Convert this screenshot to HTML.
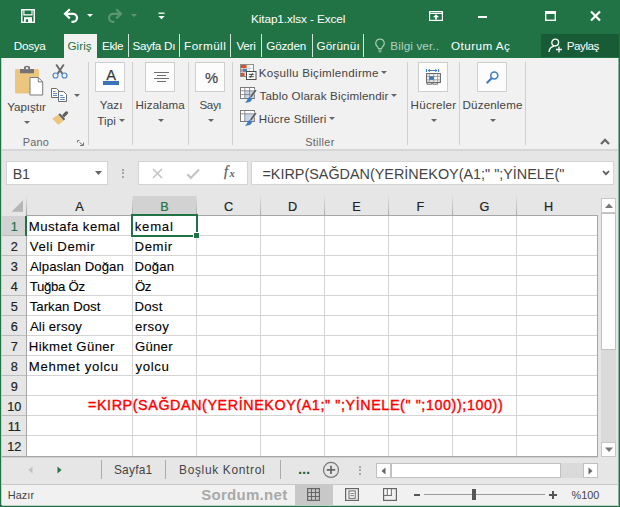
<!DOCTYPE html>
<html lang="tr"><head><meta charset="utf-8"><title>Kitap1.xlsx - Excel</title>
<style>
html,body{margin:0;padding:0;}
body{width:620px;height:507px;overflow:hidden;position:relative;background:#217346;font-family:"Liberation Sans", sans-serif;}
#w{position:absolute;left:0;top:0;width:620px;height:507px;overflow:hidden;}
#w div,#w svg,#w span{position:absolute;}
.t{white-space:pre;font-family:"Liberation Sans", sans-serif;}
svg{overflow:visible;}
</style></head><body><div id="w">
<div style="left:0px;top:0px;width:620px;height:507px;background:#217346;"></div>
<div style="left:2px;top:58px;width:617px;height:92px;background:#f1f1f1;"></div>
<div style="left:2px;top:149px;width:617px;height:2px;background:#d6d6d6;"></div>
<div style="left:2px;top:151px;width:617px;height:334px;background:#e6e6e6;"></div>
<div style="left:2px;top:484px;width:617px;height:1px;background:#c8c8c8;"></div>
<div style="left:2px;top:485px;width:617px;height:21px;background:#f1f1f1;"></div>
<div style="left:2px;top:505px;width:617px;height:1px;background:#bcd2c5;"></div>
<div style="left:1px;top:58px;width:1px;height:447px;background:#c3d3ca;"></div>
<div style="left:618px;top:58px;width:1px;height:447px;background:#89b29b;"></div>
<svg style="left:21px;top:9px" width="14" height="14" viewBox="0 0 14 14"><rect x="0.750" y="0.750" width="12.500" height="12.500" fill="none" stroke="#fff" stroke-width="1.500"/><path d="M2.900 0.750V5.900H11V0.750" fill="none" stroke="#fff" stroke-width="1.100"/><rect x="3" y="8.200" width="8" height="5" fill="#fff"/><rect x="4.800" y="10.300" width="2.300" height="2.700" fill="#217346"/></svg>
<svg style="left:63px;top:8px" width="17" height="16" viewBox="0 0 17 16"><path d="M6.800 1.200L2 5.800l4.800 4.600M2.500 5.800H10a4 4 0 0 1 0 8H8.500" fill="none" stroke="#fff" stroke-width="2.200"/></svg>
<svg style="left:87px;top:14px" width="6" height="3" viewBox="0 0 6 3"><path d="M0 0h6L3 3z" fill="#fff"/></svg>
<svg style="left:106px;top:8px" width="17" height="16" viewBox="0 0 17 16"><path d="M10.200 1.200L15 5.800l-4.800 4.600M14.500 5.800H7a4 4 0 0 0 0 8H8.500" fill="none" stroke="#5a9674" stroke-width="2.200"/></svg>
<svg style="left:131px;top:14px" width="6" height="3" viewBox="0 0 6 3"><path d="M0 0h6L3 3z" fill="#5f9a78"/></svg>
<svg style="left:158px;top:12px" width="7" height="8" viewBox="0 0 7 8"><path d="M0.5 1.2h6" stroke="#fff" stroke-width="1.3"/><path d="M0.3 4h6.4L3.5 7.2z" fill="#fff"/></svg>
<span class="t " style="left:251.06px;top:14px;font-size:11.8px;line-height:11.8px;color:#fff;letter-spacing:-0.119px;">Kitap1.xlsx - Excel</span>
<svg style="left:429px;top:11px" width="14" height="10" viewBox="0 0 14 10"><rect x="0.6" y="0.6" width="12.8" height="8.8" fill="none" stroke="#fff" stroke-width="1.2"/><path d="M0.6 2.4h12.8" stroke="#fff" stroke-width="1.2"/><path d="M7 3.200L3.800 6.300h2.300v2.300h1.800V6.300h2.300z" fill="#fff"/></svg>
<div style="left:478px;top:16px;width:9px;height:2px;background:#fff;"></div>
<svg style="left:545px;top:11px" width="11" height="10" viewBox="0 0 11 10"><rect x="0.7" y="0.7" width="9.6" height="8.6" fill="none" stroke="#fff" stroke-width="1.4"/><rect x="0" y="0" width="11" height="3" fill="#fff"/></svg>
<svg style="left:590px;top:11px" width="11" height="10" viewBox="0 0 11 10"><path d="M1 0.5l9 9M10 0.5l-9 9" stroke="#fff" stroke-width="2.2"/></svg>
<span class="t " style="left:13.86px;top:40px;font-size:11.7px;line-height:11.7px;color:#fff;letter-spacing:-0.308px;">Dosya</span>
<div style="left:64px;top:34px;width:33px;height:25px;background:#f1f1f1;"></div>
<span class="t " style="left:67.42px;top:40px;font-size:11.7px;line-height:11.7px;color:#217346;letter-spacing:0.063px;">Giriş</span>
<span class="t " style="left:102.06px;top:40px;font-size:11.7px;line-height:11.7px;color:#fff;letter-spacing:-0.451px;">Ekle</span>
<span class="t " style="left:132.47px;top:40px;font-size:11.7px;line-height:11.7px;color:#fff;letter-spacing:-0.247px;">Sayfa Dı</span>
<span class="t " style="left:184.06px;top:40px;font-size:11.7px;line-height:11.7px;color:#fff;letter-spacing:0.456px;">Formüll</span>
<span class="t " style="left:236.44px;top:40px;font-size:11.7px;line-height:11.7px;color:#fff;letter-spacing:-0.268px;">Veri</span>
<span class="t " style="left:266.22px;top:40px;font-size:11.7px;line-height:11.7px;color:#fff;letter-spacing:-0.181px;">Gözden</span>
<span class="t " style="left:316.42px;top:40px;font-size:11.7px;line-height:11.7px;color:#fff;letter-spacing:0.183px;">Görünüı</span>
<div style="left:128px;top:34px;width:1px;height:23px;background:#d6e5dc;"></div>
<div style="left:179px;top:34px;width:1px;height:23px;background:#d6e5dc;"></div>
<div style="left:230px;top:34px;width:1px;height:23px;background:#d6e5dc;"></div>
<div style="left:261px;top:34px;width:1px;height:23px;background:#d6e5dc;"></div>
<div style="left:312px;top:34px;width:1px;height:23px;background:#d6e5dc;"></div>
<div style="left:363px;top:34px;width:1px;height:23px;background:#d6e5dc;"></div>
<svg style="left:374px;top:38px" width="12" height="15" viewBox="0 0 12 15"><path d="M6 1a4.3 4.3 0 0 0-2.6 7.7c.6.5.9 1 .9 1.8h3.4c0-.8.3-1.3.9-1.8A4.3 4.3 0 0 0 6 1z" fill="none" stroke="#a8cbb6" stroke-width="1.1"/><path d="M4.3 12h3.4M4.6 13.8h2.8" stroke="#a8cbb6" stroke-width="1.1"/></svg>
<span class="t " style="left:390.36px;top:40px;font-size:11.7px;line-height:11.7px;color:#b3d1c0;letter-spacing:0.119px;">Bilgi ver..</span>
<span class="t " style="left:451.07px;top:40px;font-size:11.7px;line-height:11.7px;color:#fff;letter-spacing:0.455px;">Oturum Aç</span>
<div style="left:541px;top:34px;width:78px;height:23px;background:#185c37;"></div>
<svg style="left:548px;top:38px" width="15" height="15" viewBox="0 0 15 15"><circle cx="7.2" cy="4.6" r="3.4" fill="none" stroke="#fff" stroke-width="1.3"/><path d="M1 14c.3-3.6 2.4-5.4 5-5.6" fill="none" stroke="#fff" stroke-width="1.3"/><path d="M11 8.5v6M8 11.5h6" stroke="#fff" stroke-width="1.3"/></svg>
<span class="t " style="left:566.76px;top:40px;font-size:11.7px;line-height:11.7px;color:#fff;letter-spacing:-0.491px;">Paylaş</span>
<div style="left:88px;top:62px;width:1px;height:83px;background:#d0d0d0;"></div>
<div style="left:132px;top:62px;width:1px;height:83px;background:#d0d0d0;"></div>
<div style="left:188px;top:62px;width:1px;height:83px;background:#d0d0d0;"></div>
<div style="left:232px;top:62px;width:1px;height:83px;background:#d0d0d0;"></div>
<div style="left:407px;top:62px;width:1px;height:83px;background:#d0d0d0;"></div>
<div style="left:459px;top:62px;width:1px;height:83px;background:#d0d0d0;"></div>
<div style="left:525px;top:62px;width:1px;height:83px;background:#d0d0d0;"></div>
<svg style="left:14px;top:65px" width="30" height="31" viewBox="0 0 30 31"><rect x="1" y="4" width="24" height="24.5" rx="1.5" fill="#ecc57f"/><path d="M6 8.300V4h4V2.600Q10 0.800 13 0.800t3 1.800V4H20V8.300z" fill="#737373"/><rect x="11.800" y="2.300" width="2.400" height="1.900" fill="#f1f1f1"/><path d="M16 12.500h8.300l4.400 4.400V30H16z" fill="#fff" stroke="#7a7a7a" stroke-width="1"/><path d="M24.300 12.500v4.400h4.400" fill="none" stroke="#7a7a7a" stroke-width="1"/></svg>
<span class="t " style="left:7.27px;top:101px;font-size:11.6px;line-height:11.6px;color:#444;letter-spacing:-0.063px;">Yapıştır</span>
<svg style="left:24px;top:121px" width="6" height="3" viewBox="0 0 6 3"><path d="M0 0h6L3 3z" fill="#666"/></svg>
<svg style="left:52px;top:64px" width="16" height="15" viewBox="0 0 16 15"><path d="M4.200 0.500L10.300 9.600M11.800 0.500L5.700 9.600" stroke="#6a6a6a" stroke-width="1.900" fill="none"/><circle cx="3.500" cy="11.500" r="2.500" fill="none" stroke="#4a86c5" stroke-width="1.150"/><circle cx="12.500" cy="11.500" r="2.500" fill="none" stroke="#4a86c5" stroke-width="1.150"/></svg>
<svg style="left:51px;top:88px" width="17" height="14" viewBox="0 0 17 14"><path d="M0.500 0.500h5l2.500 2.500V9.500H0.500z" fill="#fff" stroke="#6a6a6a" stroke-width="1"/><path d="M2 3.500h2.500M2 5.500h4M2 7.500h4" stroke="#3f7dc1" stroke-width="0.900"/><path d="M7.500 3.500h5l3 3v7H7.500z" fill="#fff" stroke="#6a6a6a" stroke-width="1"/><path d="M9.200 7.500h3M9.200 9.500h4.600M9.200 11.500h4.600" stroke="#3f7dc1" stroke-width="0.900"/></svg>
<svg style="left:74px;top:94px" width="6" height="3" viewBox="0 0 6 3"><path d="M0 0h6L3 3z" fill="#666"/></svg>
<svg style="left:52px;top:110.5px" width="17" height="15" viewBox="0 0 17 15"><path d="M0.200 7.400L6.400 3.600l5.400 5.800-5.500 4.500z" fill="#ecc57f"/><path d="M6.400 3.600l1.500-1.400 5.300 5.800-1.400 1.400z" fill="#5f5f5f"/><path d="M10 4.300l3.600-3.700q1.200-.8 2.200.2.800 1 0 2l-3.700 3.700z" fill="#5f5f5f"/></svg>
<span class="t " style="left:22.83px;top:137px;font-size:10.9px;line-height:10.9px;color:#666;letter-spacing:0.152px;">Pano</span>
<svg style="left:77px;top:140px" width="7" height="6" viewBox="0 0 7 6"><path d="M0.500 2.500V0.500H2.500M2.500 2.500l4 3M6.500 2.500v3h-3.500" fill="none" stroke="#777" stroke-width="1"/></svg>
<div style="left:95px;top:62px;width:30px;height:30px;background:#fcfcfc;border:1px solid #cfcfcf;box-sizing:border-box;"></div>
<div style="left:145px;top:62px;width:30px;height:30px;background:#fcfcfc;border:1px solid #cfcfcf;box-sizing:border-box;"></div>
<div style="left:195px;top:62px;width:30px;height:30px;background:#fcfcfc;border:1px solid #cfcfcf;box-sizing:border-box;"></div>
<div style="left:418px;top:62px;width:30px;height:30px;background:#fcfcfc;border:1px solid #cfcfcf;box-sizing:border-box;"></div>
<div style="left:477px;top:62px;width:30px;height:30px;background:#fcfcfc;border:1px solid #cfcfcf;box-sizing:border-box;"></div>
<span class="t " style="left:106.2px;top:68px;font-size:14.6px;line-height:14.6px;color:#3a3a3a;letter-spacing:0.191px;-webkit-text-stroke:0.25px #3a3a3a;">A</span>
<div style="left:103px;top:81px;width:16px;height:3.5px;background:#3b74b9;"></div>
<span class="t " style="left:99.77px;top:99px;font-size:11.6px;line-height:11.6px;color:#444;letter-spacing:0.082px;">Yazı</span>
<span class="t " style="left:97.37px;top:115px;font-size:11.6px;line-height:11.6px;color:#444;letter-spacing:0.058px;">Tipi</span>
<svg style="left:119px;top:119px" width="6" height="3" viewBox="0 0 6 3"><path d="M0 0h6L3 3z" fill="#666"/></svg>
<div style="left:154px;top:72px;width:14.5px;height:1px;background:#707070;"></div>
<div style="left:156.5px;top:75px;width:9.5px;height:1px;background:#707070;"></div>
<div style="left:154px;top:78px;width:14.5px;height:1px;background:#707070;"></div>
<div style="left:156.5px;top:81px;width:9.5px;height:1px;background:#707070;"></div>
<span class="t " style="left:135.57px;top:99px;font-size:11.6px;line-height:11.6px;color:#444;letter-spacing:0.116px;">Hizalama</span>
<svg style="left:157.5px;top:119px" width="6" height="3" viewBox="0 0 6 3"><path d="M0 0h6L3 3z" fill="#666"/></svg>
<span class="t " style="left:205.08px;top:71px;font-size:14.8px;line-height:14.8px;color:#444;letter-spacing:0.264px;-webkit-text-stroke:0.2px #444;">%</span>
<span class="t " style="left:199.48px;top:99px;font-size:11.6px;line-height:11.6px;color:#444;letter-spacing:-0.378px;">Sayı</span>
<svg style="left:207.5px;top:119px" width="6" height="3" viewBox="0 0 6 3"><path d="M0 0h6L3 3z" fill="#666"/></svg>
<svg style="left:240px;top:64px" width="17" height="16" viewBox="0 0 17 16"><rect x="0.500" y="0.500" width="13" height="12" fill="#fff" stroke="#8e8e8e" stroke-width="1"/><path d="M0.500 4.400h13M0.500 8.400h13M9.200 0.500v12" stroke="#c9c9c9" stroke-width="0.800"/><rect x="1" y="1" width="5.600" height="3" fill="#d8502c"/><rect x="1" y="4.900" width="1.800" height="3" fill="#e58a70"/><rect x="2.800" y="4.900" width="4.200" height="3" fill="#4a7fc4"/><rect x="1" y="8.900" width="3.600" height="3.100" fill="#d8502c"/><rect x="6.500" y="7.500" width="9.500" height="8" fill="#fff" stroke="#4d4d4d" stroke-width="1"/><path d="M8.800 10.400h5M8.800 12.700h5M12.600 9.200l-2.600 4.700" stroke="#333" stroke-width="0.900"/></svg>
<span class="t " style="left:258.77px;top:67px;font-size:11.6px;line-height:11.6px;color:#444;letter-spacing:0.28px;">Koşullu Biçimlendirme</span>
<svg style="left:381px;top:71px" width="6" height="3" viewBox="0 0 6 3"><path d="M0 0h6L3 3z" fill="#666"/></svg>
<svg style="left:240px;top:87px" width="17" height="16" viewBox="0 0 17 16"><rect x="0.500" y="0.500" width="14" height="11" fill="#fff" stroke="#7a7a7a" stroke-width="1"/><rect x="4.800" y="4" width="9.400" height="7" fill="#c5d6ec"/><path d="M0.500 3.800h14M0.500 7.600h14M4.800 0.500v11M9.600 0.500v11" stroke="#7a7a7a" stroke-width="0.800"/><path d="M9.600 9.400l5.200-7.400 2 1.600-5.200 7.400z" fill="#5f5f5f" stroke="#f1f1f1" stroke-width="0.600"/><path d="M9.800 9.800l2.200 2c0 2.700-2.800 4.200-7.200 3.800 2.400-1 2.200-4 5-5.800z" fill="#3f7dc1"/></svg>
<span class="t " style="left:259.47px;top:90px;font-size:11.6px;line-height:11.6px;color:#444;letter-spacing:0.174px;">Tablo Olarak Biçimlendir</span>
<svg style="left:391px;top:94px" width="6" height="3" viewBox="0 0 6 3"><path d="M0 0h6L3 3z" fill="#666"/></svg>
<svg style="left:240px;top:109.5px" width="17" height="16" viewBox="0 0 17 16"><rect x="0.500" y="0.500" width="14" height="11" fill="#fff" stroke="#7a7a7a" stroke-width="1"/><rect x="4.800" y="4" width="9.400" height="7" fill="#c5d6ec"/><path d="M0.500 3.800h14M4.800 0.500v11" stroke="#7a7a7a" stroke-width="0.800"/><path d="M9.600 9.400l5.200-7.400 2 1.600-5.200 7.400z" fill="#5f5f5f" stroke="#f1f1f1" stroke-width="0.600"/><path d="M9.800 9.800l2.200 2c0 2.700-2.800 4.200-7.200 3.800 2.400-1 2.200-4 5-5.800z" fill="#3f7dc1"/></svg>
<span class="t " style="left:258.77px;top:113px;font-size:11.6px;line-height:11.6px;color:#444;letter-spacing:0.144px;">Hücre Stilleri</span>
<svg style="left:328.5px;top:117px" width="6" height="3" viewBox="0 0 6 3"><path d="M0 0h6L3 3z" fill="#666"/></svg>
<span class="t " style="left:305.21px;top:137px;font-size:10.9px;line-height:10.9px;color:#666;letter-spacing:0.308px;">Stiller</span>
<svg style="left:418px;top:62px" width="30" height="30" viewBox="0 0 30 30"><path d="M8.500 7v3M20.600 7v3" stroke="#3f7dc1" stroke-width="1.100"/><path d="M10.800 8.500h7.600" stroke="#3f7dc1" stroke-width="1"/><path d="M9.600 8.500l2.300-1.700v3.400zM19.500 8.500l-2.300-1.700v3.400z" fill="#3f7dc1"/><rect x="8.600" y="11.600" width="13.800" height="8.800" fill="#fff" stroke="#666" stroke-width="1.100"/><path d="M9.200 14.400h12.600M9.200 17.850h12.600M11.300 12.200v7.600M15.800 12.200v7.600M19.600 12.200v7.600" stroke="#9c9c9c" stroke-width="1"/><rect x="11.300" y="14.300" width="4.500" height="3.500" fill="#3f75b5"/><path d="M9 20.800v1.400h4.800v-1.200M14.800 21v1.200h4.800v-1.400" fill="none" stroke="#5e5e5e" stroke-width="0.900"/></svg>
<span class="t " style="left:410.57px;top:99px;font-size:11.6px;line-height:11.6px;color:#444;letter-spacing:0.251px;">Hücreler</span>
<svg style="left:430.5px;top:119px" width="6" height="3" viewBox="0 0 6 3"><path d="M0 0h6L3 3z" fill="#666"/></svg>
<svg style="left:486px;top:71px" width="13" height="13" viewBox="0 0 13 13"><circle cx="8.300" cy="4.500" r="3.500" fill="none" stroke="#3f7dc1" stroke-width="1.600"/><path d="M5.600 7.300L1.300 11.500" stroke="#3f7dc1" stroke-width="2.200" stroke-linecap="round"/></svg>
<span class="t " style="left:462.57px;top:99px;font-size:11.6px;line-height:11.6px;color:#444;letter-spacing:0.157px;">Düzenleme</span>
<svg style="left:489.5px;top:119px" width="6" height="3" viewBox="0 0 6 3"><path d="M0 0h6L3 3z" fill="#666"/></svg>
<svg style="left:600px;top:138px" width="10" height="7" viewBox="0 0 10 7"><path d="M1 6l4-4.200L9 6" fill="none" stroke="#666" stroke-width="2.200"/></svg>
<div style="left:6px;top:161px;width:102px;height:24px;background:#fff;border:1px solid #d4d4d4;box-sizing:border-box;"></div>
<span class="t " style="left:12.65px;top:167px;font-size:14.4px;line-height:14.4px;color:#444;letter-spacing:-0.268px;">B1</span>
<svg style="left:94.5px;top:171px" width="7" height="4" viewBox="0 0 7 4"><path d="M0 0h7L3.500 4z" fill="#666"/></svg>
<div style="left:122px;top:168.5px;width:2px;height:2px;background:#a6a6a6;"></div>
<div style="left:122px;top:172px;width:2px;height:2px;background:#a6a6a6;"></div>
<div style="left:122px;top:175.5px;width:2px;height:2px;background:#a6a6a6;"></div>
<div style="left:138px;top:161px;width:110px;height:24px;background:#fff;border:1px solid #d4d4d4;box-sizing:border-box;"></div>
<svg style="left:151.5px;top:167.5px" width="11" height="11" viewBox="0 0 11 11"><path d="M1 1l9 9M10 1l-9 9" stroke="#c2c2c2" stroke-width="1.500"/></svg>
<svg style="left:186px;top:167.5px" width="15" height="12" viewBox="0 0 15 12"><path d="M1.500 6.300l3.300 3.700L13 1.500" fill="none" stroke="#c2c2c2" stroke-width="2.100"/></svg>
<span class="t " style="left:224px;top:165px;font-size:14px;line-height:14px;color:#606060;font-family:'Liberation Serif',serif;font-style:italic;-webkit-text-stroke:0.3px #606060;">f</span>
<span class="t " style="left:229.6px;top:169px;font-size:10.5px;line-height:10.5px;color:#606060;font-family:'Liberation Serif',serif;font-style:italic;font-weight:bold;">x</span>
<div style="left:251px;top:161px;width:363px;height:24px;background:#fff;border:1px solid #d4d4d4;box-sizing:border-box;"></div>
<span class="t " style="left:262.48px;top:167px;font-size:14.4px;line-height:14.4px;color:#444;letter-spacing:-0.004px;">=KIRP(SAĞDAN(YERİNEKOY(A1;" ";YİNELE("</span>
<svg style="left:601.5px;top:170px" width="8" height="6" viewBox="0 0 8 6"><path d="M1 1l3 3.200L7 1" fill="none" stroke="#555" stroke-width="1.700"/></svg>
<div style="left:27px;top:216px;width:571px;height:240px;background:#fff;"></div>
<div style="left:132px;top:196px;width:64.5px;height:18px;background:#d2d2d2;"></div>
<div style="left:2px;top:216px;width:24px;height:20px;background:#d2d2d2;"></div>
<svg style="left:11px;top:200px" width="12" height="12" viewBox="0 0 12 12"><path d="M12 0.300V11.800H0.500z" fill="#b6b6b6"/></svg>
<div style="left:26px;top:196px;width:1px;height:20px;background:linear-gradient(#e6e6e6,#9c9c9c);"></div>
<div style="left:132.0px;top:196px;width:1px;height:20px;background:linear-gradient(#e2e2e2,#a8a8a8);"></div>
<div style="left:196.0px;top:196px;width:1px;height:20px;background:linear-gradient(#e2e2e2,#a8a8a8);"></div>
<div style="left:260.0px;top:196px;width:1px;height:20px;background:linear-gradient(#e2e2e2,#a8a8a8);"></div>
<div style="left:324.0px;top:196px;width:1px;height:20px;background:linear-gradient(#e2e2e2,#a8a8a8);"></div>
<div style="left:388.0px;top:196px;width:1px;height:20px;background:linear-gradient(#e2e2e2,#a8a8a8);"></div>
<div style="left:452.0px;top:196px;width:1px;height:20px;background:linear-gradient(#e2e2e2,#a8a8a8);"></div>
<div style="left:516.0px;top:196px;width:1px;height:20px;background:linear-gradient(#e2e2e2,#a8a8a8);"></div>
<div style="left:132.0px;top:216px;width:1px;height:240px;background:#d4d4d4;"></div>
<div style="left:196.0px;top:216px;width:1px;height:240px;background:#d4d4d4;"></div>
<div style="left:260.0px;top:216px;width:1px;height:240px;background:#d4d4d4;"></div>
<div style="left:324.0px;top:216px;width:1px;height:240px;background:#d4d4d4;"></div>
<div style="left:388.0px;top:216px;width:1px;height:240px;background:#d4d4d4;"></div>
<div style="left:452.0px;top:216px;width:1px;height:240px;background:#d4d4d4;"></div>
<div style="left:516.0px;top:216px;width:1px;height:240px;background:#d4d4d4;"></div>
<div style="left:2px;top:235px;width:596px;height:1px;background:#d4d4d4;"></div>
<div style="left:2px;top:235px;width:24px;height:1px;background:#bdbdbd;"></div>
<div style="left:2px;top:255px;width:596px;height:1px;background:#d4d4d4;"></div>
<div style="left:2px;top:255px;width:24px;height:1px;background:#bdbdbd;"></div>
<div style="left:2px;top:275px;width:596px;height:1px;background:#d4d4d4;"></div>
<div style="left:2px;top:275px;width:24px;height:1px;background:#bdbdbd;"></div>
<div style="left:2px;top:295px;width:596px;height:1px;background:#d4d4d4;"></div>
<div style="left:2px;top:295px;width:24px;height:1px;background:#bdbdbd;"></div>
<div style="left:2px;top:315px;width:596px;height:1px;background:#d4d4d4;"></div>
<div style="left:2px;top:315px;width:24px;height:1px;background:#bdbdbd;"></div>
<div style="left:2px;top:335px;width:596px;height:1px;background:#d4d4d4;"></div>
<div style="left:2px;top:335px;width:24px;height:1px;background:#bdbdbd;"></div>
<div style="left:2px;top:355px;width:596px;height:1px;background:#d4d4d4;"></div>
<div style="left:2px;top:355px;width:24px;height:1px;background:#bdbdbd;"></div>
<div style="left:2px;top:375px;width:596px;height:1px;background:#d4d4d4;"></div>
<div style="left:2px;top:375px;width:24px;height:1px;background:#bdbdbd;"></div>
<div style="left:2px;top:395px;width:596px;height:1px;background:#d4d4d4;"></div>
<div style="left:2px;top:395px;width:24px;height:1px;background:#bdbdbd;"></div>
<div style="left:2px;top:415px;width:596px;height:1px;background:#d4d4d4;"></div>
<div style="left:2px;top:415px;width:24px;height:1px;background:#bdbdbd;"></div>
<div style="left:2px;top:435px;width:596px;height:1px;background:#d4d4d4;"></div>
<div style="left:2px;top:435px;width:24px;height:1px;background:#bdbdbd;"></div>
<div style="left:26px;top:216px;width:1px;height:240px;background:#a8a8a8;"></div>
<div style="left:27px;top:215px;width:571px;height:1px;background:#a6a6a6;"></div>
<div style="left:597px;top:215px;width:1px;height:242px;background:#a6a6a6;"></div>
<div style="left:2px;top:456px;width:596px;height:1px;background:#a6a6a6;"></div>
<div style="left:2px;top:457px;width:596px;height:1px;background:#d0d0d0;"></div>
<div style="left:25px;top:216px;width:2px;height:20px;background:#217346;"></div>
<span class="t" style="left:59.5px;width:40px;text-align:center;top:201px;font-size:12.7px;line-height:12.7px;color:#222;-webkit-text-stroke:0.2px #222">A</span>
<span class="t" style="left:144.5px;width:40px;text-align:center;top:201px;font-size:12.7px;line-height:12.7px;color:#217346;-webkit-text-stroke:0.2px #217346">B</span>
<span class="t" style="left:208.5px;width:40px;text-align:center;top:201px;font-size:12.7px;line-height:12.7px;color:#222;-webkit-text-stroke:0.2px #222">C</span>
<span class="t" style="left:272.5px;width:40px;text-align:center;top:201px;font-size:12.7px;line-height:12.7px;color:#222;-webkit-text-stroke:0.2px #222">D</span>
<span class="t" style="left:336.5px;width:40px;text-align:center;top:201px;font-size:12.7px;line-height:12.7px;color:#222;-webkit-text-stroke:0.2px #222">E</span>
<span class="t" style="left:400.5px;width:40px;text-align:center;top:201px;font-size:12.7px;line-height:12.7px;color:#222;-webkit-text-stroke:0.2px #222">F</span>
<span class="t" style="left:464.5px;width:40px;text-align:center;top:201px;font-size:12.7px;line-height:12.7px;color:#222;-webkit-text-stroke:0.2px #222">G</span>
<span class="t" style="left:528.5px;width:40px;text-align:center;top:201px;font-size:12.7px;line-height:12.7px;color:#222;-webkit-text-stroke:0.2px #222">H</span>
<span class="t" style="left:2.8px;width:23px;text-align:center;top:221px;font-size:12.7px;line-height:12.7px;color:#217346;-webkit-text-stroke:0.2px #217346">1</span>
<span class="t" style="left:2.8px;width:23px;text-align:center;top:241px;font-size:12.7px;line-height:12.7px;color:#222;-webkit-text-stroke:0.2px #222">2</span>
<span class="t" style="left:2.8px;width:23px;text-align:center;top:261px;font-size:12.7px;line-height:12.7px;color:#222;-webkit-text-stroke:0.2px #222">3</span>
<span class="t" style="left:2.8px;width:23px;text-align:center;top:281px;font-size:12.7px;line-height:12.7px;color:#222;-webkit-text-stroke:0.2px #222">4</span>
<span class="t" style="left:2.8px;width:23px;text-align:center;top:301px;font-size:12.7px;line-height:12.7px;color:#222;-webkit-text-stroke:0.2px #222">5</span>
<span class="t" style="left:2.8px;width:23px;text-align:center;top:321px;font-size:12.7px;line-height:12.7px;color:#222;-webkit-text-stroke:0.2px #222">6</span>
<span class="t" style="left:2.8px;width:23px;text-align:center;top:341px;font-size:12.7px;line-height:12.7px;color:#222;-webkit-text-stroke:0.2px #222">7</span>
<span class="t" style="left:2.8px;width:23px;text-align:center;top:361px;font-size:12.7px;line-height:12.7px;color:#222;-webkit-text-stroke:0.2px #222">8</span>
<span class="t" style="left:2.8px;width:23px;text-align:center;top:381px;font-size:12.7px;line-height:12.7px;color:#222;-webkit-text-stroke:0.2px #222">9</span>
<span class="t" style="left:2.8px;width:23px;text-align:center;top:401px;font-size:12.7px;line-height:12.7px;color:#222;-webkit-text-stroke:0.2px #222">10</span>
<span class="t" style="left:2.8px;width:23px;text-align:center;top:421px;font-size:12.7px;line-height:12.7px;color:#222;-webkit-text-stroke:0.2px #222">11</span>
<span class="t" style="left:2.8px;width:23px;text-align:center;top:441px;font-size:12.7px;line-height:12.7px;color:#222;-webkit-text-stroke:0.2px #222">12</span>
<span class="t " style="left:28.84px;top:220px;font-size:13.2px;line-height:13.2px;color:#000;letter-spacing:0.434px;-webkit-text-stroke:0.1px #000;">Mustafa kemal</span>
<span class="t " style="left:134.74px;top:220px;font-size:13.2px;line-height:13.2px;color:#000;letter-spacing:0.735px;-webkit-text-stroke:0.1px #000;">kemal</span>
<span class="t " style="left:29.83px;top:240px;font-size:13.2px;line-height:13.2px;color:#000;letter-spacing:0.519px;-webkit-text-stroke:0.1px #000;">Veli Demir</span>
<span class="t " style="left:134.54px;top:240px;font-size:13.2px;line-height:13.2px;color:#000;letter-spacing:0.603px;-webkit-text-stroke:0.1px #000;">Demir</span>
<span class="t " style="left:29.9px;top:260px;font-size:13.2px;line-height:13.2px;color:#000;letter-spacing:0.059px;-webkit-text-stroke:0.1px #000;">Alpaslan Doğan</span>
<span class="t " style="left:134.54px;top:260px;font-size:13.2px;line-height:13.2px;color:#000;letter-spacing:0.185px;-webkit-text-stroke:0.1px #000;">Doğan</span>
<span class="t " style="left:29.64px;top:280px;font-size:13.2px;line-height:13.2px;color:#000;letter-spacing:-0.28px;-webkit-text-stroke:0.1px #000;">Tuğba Öz</span>
<span class="t " style="left:135.01px;top:280px;font-size:13.2px;line-height:13.2px;color:#000;letter-spacing:-0.542px;-webkit-text-stroke:0.1px #000;">Öz</span>
<span class="t " style="left:29.64px;top:300px;font-size:13.2px;line-height:13.2px;color:#000;letter-spacing:0.041px;-webkit-text-stroke:0.1px #000;">Tarkan Dost</span>
<span class="t " style="left:134.54px;top:300px;font-size:13.2px;line-height:13.2px;color:#000;letter-spacing:0.232px;-webkit-text-stroke:0.1px #000;">Dost</span>
<span class="t " style="left:29.9px;top:320px;font-size:13.2px;line-height:13.2px;color:#000;letter-spacing:0.16px;-webkit-text-stroke:0.1px #000;">Ali ersoy</span>
<span class="t " style="left:135.07px;top:320px;font-size:13.2px;line-height:13.2px;color:#000;letter-spacing:0.414px;-webkit-text-stroke:0.1px #000;">ersoy</span>
<span class="t " style="left:28.84px;top:340px;font-size:13.2px;line-height:13.2px;color:#000;letter-spacing:0.392px;-webkit-text-stroke:0.1px #000;">Hikmet Güner</span>
<span class="t " style="left:134.94px;top:340px;font-size:13.2px;line-height:13.2px;color:#000;letter-spacing:0.241px;-webkit-text-stroke:0.1px #000;">Güner</span>
<span class="t " style="left:28.84px;top:360px;font-size:13.2px;line-height:13.2px;color:#000;letter-spacing:0.649px;-webkit-text-stroke:0.1px #000;">Mehmet yolcu</span>
<span class="t " style="left:135.6px;top:360px;font-size:13.2px;line-height:13.2px;color:#000;letter-spacing:0.609px;-webkit-text-stroke:0.1px #000;">yolcu</span>
<div style="left:131px;top:214px;width:67px;height:22.5px;border:2px solid #217346;box-sizing:border-box;"></div>
<div style="left:193px;top:232px;width:7px;height:7px;background:#217346;border:1px solid #fff;box-sizing:border-box;"></div>
<span class="t " style="left:87.98px;top:398px;font-size:14.3px;line-height:14.3px;color:#ff0000;letter-spacing:0.607px;-webkit-text-stroke:0.4px #ff0000;">=KIRP(SAĞDAN(YERİNEKOY(A1;" ";YİNELE(" ";100));100))</span>
<div style="left:601px;top:198px;width:15px;height:15px;background:#fff;border:1px solid #c6c6c6;box-sizing:border-box;"></div>
<svg style="left:605px;top:203px" width="8" height="5" viewBox="0 0 8 5"><path d="M0 5h8L4 0.500z" fill="#777"/></svg>
<div style="left:601px;top:213px;width:15px;height:229px;background:#dadada;"></div>
<div style="left:601px;top:213px;width:15px;height:137px;background:#fff;border:1px solid #c0c0c0;box-sizing:border-box;"></div>
<div style="left:601px;top:442px;width:15px;height:15px;background:#fff;border:1px solid #c6c6c6;box-sizing:border-box;"></div>
<svg style="left:605px;top:447px" width="8" height="5" viewBox="0 0 8 5"><path d="M0 0.500h8L4 5z" fill="#777"/></svg>
<svg style="left:28px;top:466px" width="5" height="8" viewBox="0 0 5 8"><path d="M4.500 0.500v7L0.500 4z" fill="#c2c2c2"/></svg>
<svg style="left:56.5px;top:466px" width="5" height="8" viewBox="0 0 5 8"><path d="M0.500 0.500v7L4.500 4z" fill="#217346"/></svg>
<div style="left:101px;top:460px;width:1px;height:19px;background:#ababab;"></div>
<div style="left:165px;top:460px;width:1px;height:19px;background:#ababab;"></div>
<div style="left:280px;top:460px;width:1px;height:19px;background:#ababab;"></div>
<span class="t " style="left:113.96px;top:465px;font-size:11.9px;line-height:11.9px;color:#444;letter-spacing:0.232px;">Sayfa1</span>
<span class="t " style="left:179.05px;top:465px;font-size:11.9px;line-height:11.9px;color:#444;letter-spacing:0.687px;">Boşluk Kontrol</span>
<span class="t " style="left:298.1px;top:461px;font-size:15px;line-height:15px;color:#1b6a3e;letter-spacing:-0.17px;font-weight:bold;">...</span>
<svg style="left:323px;top:462px" width="16" height="16" viewBox="0 0 16 16"><circle cx="8" cy="7.900" r="7.500" fill="none" stroke="#777" stroke-width="1.200"/><path d="M8 3.700v8.400M3.800 7.900h8.400" stroke="#666" stroke-width="1.700"/></svg>
<div style="left:359px;top:465.5px;width:2px;height:2px;background:#a6a6a6;"></div>
<div style="left:359px;top:469px;width:2px;height:2px;background:#a6a6a6;"></div>
<div style="left:359px;top:472.5px;width:2px;height:2px;background:#a6a6a6;"></div>
<div style="left:376px;top:463px;width:222px;height:15px;background:#dadada;"></div>
<div style="left:376px;top:463px;width:15px;height:15px;background:#fff;border:1px solid #c0c0c0;box-sizing:border-box;"></div>
<svg style="left:381px;top:467px" width="5" height="8" viewBox="0 0 5 8"><path d="M4.500 0.500v7L0.500 4z" fill="#666"/></svg>
<div style="left:391px;top:463px;width:170px;height:15px;background:#fff;border:1px solid #c0c0c0;box-sizing:border-box;"></div>
<div style="left:583px;top:463px;width:15px;height:15px;background:#fff;border:1px solid #c0c0c0;box-sizing:border-box;"></div>
<svg style="left:588px;top:467px" width="5" height="8" viewBox="0 0 5 8"><path d="M0.500 0.500v7L4.500 4z" fill="#666"/></svg>
<span class="t " style="left:7.83px;top:490px;font-size:10.9px;line-height:10.9px;color:#444;letter-spacing:0.046px;">Hazır</span>
<span class="t " style="left:201.15px;top:487px;font-size:15px;line-height:15px;color:#a9a9a9;letter-spacing:0.297px;font-weight:bold;">Sordum.net</span>
<div style="left:295px;top:485px;width:38px;height:20px;background:#c8c8c8;"></div>
<svg style="left:307px;top:488px" width="13" height="13" viewBox="0 0 13 13"><rect x="0.600" y="0.600" width="11.800" height="11.800" fill="none" stroke="#666" stroke-width="1.200"/><path d="M0.500 4.500h12M0.500 8.500h12M4.500 0.500v12M8.500 0.500v12" stroke="#666" stroke-width="1.100"/></svg>
<svg style="left:345px;top:488px" width="14" height="13" viewBox="0 0 14 13"><rect x="0.600" y="0.600" width="12.800" height="11.800" fill="none" stroke="#666" stroke-width="1.200"/><rect x="4" y="3" width="6.200" height="7.300" fill="#fff" stroke="#666" stroke-width="1"/><path d="M5.300 5.600h3.600M5.300 7.700h3.600" stroke="#666" stroke-width="0.900"/></svg>
<svg style="left:383px;top:488px" width="14" height="13" viewBox="0 0 14 13"><rect x="1" y="1" width="7.500" height="6.400" fill="#fff"/><rect x="0.600" y="0.600" width="12.800" height="11.800" fill="none" stroke="#666" stroke-width="1.200"/><path d="M4.300 0.500v6.800M8.300 0.500v7.400M0.500 7.400h8.300" fill="none" stroke="#666" stroke-width="1"/></svg>
<div style="left:414px;top:493.5px;width:6px;height:2px;background:#555;"></div>
<div style="left:424px;top:494px;width:121px;height:1px;background:#9a9a9a;"></div>
<div style="left:472px;top:489px;width:4px;height:10.5px;background:#555;"></div>
<div style="left:549px;top:493.7px;width:8px;height:2px;background:#555;"></div>
<div style="left:552px;top:490.7px;width:2px;height:8px;background:#555;"></div>
<span class="t " style="left:571.62px;top:490px;font-size:10.9px;line-height:10.9px;color:#444;letter-spacing:-0.029px;">%100</span>
</div></body></html>
